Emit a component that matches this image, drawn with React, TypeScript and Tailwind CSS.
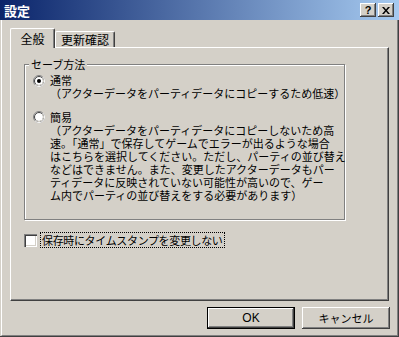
import React from "react";

const raised =
  "shadow-[inset_-1px_-1px_0_#404040,inset_1px_1px_0_#ffffff,inset_-2px_-2px_0_#808080,inset_2px_2px_0_#d4d0c8]";

function Radio({ checked }: { checked?: boolean }) {
  return (
    <svg width="12" height="12" viewBox="0 0 12 12" className="shrink-0">
      <circle cx="6" cy="6" r="5.5" fill="#ffffff" />
      <circle cx="6" cy="6" r="5.5" fill="none" stroke="#808080" strokeWidth="1" />
      <path d="M9.89 2.11 A5.5 5.5 0 0 1 2.11 9.89" fill="none" stroke="#ffffff" strokeWidth="1" />
      <circle cx="6" cy="6" r="4.5" fill="none" stroke="#404040" strokeWidth="1" />
      <path d="M9.18 2.82 A4.5 4.5 0 0 1 2.82 9.18" fill="none" stroke="#d4d0c8" strokeWidth="1" />
      {checked && <circle cx="6" cy="6" r="2" fill="#000000" />}
    </svg>
  );
}

export default function App() {
  return (
    <div className="w-[399px] h-[337px] bg-[#d4d0c8] flex flex-col font-['Noto_Sans_CJK_JP',sans-serif] text-black overflow-hidden">
      {/* Title bar */}
      <div className="h-[20px] shrink-0 flex items-center justify-between bg-[linear-gradient(to_right,#0a246a,#a6caf0)] pl-[4px] pr-[5px]">
        <span className="text-white font-bold text-[13px] leading-none">設定</span>
        <div className="flex items-center gap-[2px]">
          <div className={`w-[16px] h-[14px] bg-[#d4d0c8] flex items-center justify-center ${raised}`}>
            <span className="text-[11px] font-bold leading-none font-['Liberation_Sans',sans-serif] mt-[1px]">?</span>
          </div>
          <div className={`w-[16px] h-[14px] bg-[#d4d0c8] flex items-center justify-center ${raised}`}>
            <svg width="8" height="7" viewBox="0 0 8 7">
              <path d="M0 0h2l2 2.5L6 0h2L5 3.5 8 7H6L4 4.5 2 7H0l3-3.5z" fill="#000" />
            </svg>
          </div>
        </div>
      </div>

      {/* Body with window border */}
      <div className="flex-1 flex flex-col border-r border-b border-[#404040]">
        <div className="flex-1 flex flex-col ml-[1px] border-l border-white border-r border-b border-r-[#808080] border-b-[#808080] pt-[8px] pl-[8px] pr-[7px]">
          {/* Tabs */}
          <div className="h-[19px] flex items-end">
            <div className="relative z-10 -mb-[1px] h-[20px] w-[45px] bg-[#d4d0c8] border-l border-t border-white border-r border-r-[#404040] rounded-tl-[2px] rounded-tr-[2px] shadow-[inset_-1px_0_0_#808080] flex items-center justify-center text-[12px] leading-none">
              全般
            </div>
            <div className="h-[16px] w-[60px] bg-[#d4d0c8] border-l border-t border-white border-r border-r-[#404040] rounded-tl-[2px] rounded-tr-[2px] shadow-[inset_-1px_0_0_#808080] flex items-center justify-center text-[12px] leading-none pt-[1px]">
              更新確認
            </div>
          </div>

          {/* Panel */}
          <div className="w-[379px] h-[254px] border-l border-t border-white border-r border-b border-r-[#404040] border-b-[#404040] shadow-[inset_-1px_-1px_0_#808080] flex flex-col pl-[13px] pt-[16px]">
            {/* Group box */}
            <div className="relative w-[321px] h-[156px] border border-[#808080] shadow-[inset_1px_1px_0_#ffffff,1px_1px_0_#ffffff] pt-[9px] pl-[8px] text-[11px] leading-[13px]">
              <span className="absolute left-[4px] top-[-8px] bg-[#d4d0c8] px-[2px] text-[11px] leading-[14px]">
                セーブ方法
              </span>
              <div className="flex items-start gap-[5px]">
                <div className="mt-[1px]">
                  <Radio checked />
                </div>
                <div className="whitespace-nowrap">
                  <div>通常</div>
                  <div>（アクターデータをパーティデータにコピーするため低速）</div>
                </div>
              </div>
              <div className="flex items-start gap-[5px] mt-[11px]">
                <div className="mt-[0px]">
                  <Radio />
                </div>
                <div className="whitespace-nowrap">
                  <div>簡易</div>
                  <div>（アクターデータをパーティデータにコピーしないため高</div>
                  <div>速。「通常」で保存してゲームでエラーが出るような場合</div>
                  <div>はこちらを選択してください。ただし、パーティの並び替え</div>
                  <div>などはできません。また、変更したアクターデータもパー</div>
                  <div>ティデータに反映されていない可能性が高いので、ゲー</div>
                  <div>ム内でパーティの並び替えをする必要があります）</div>
                </div>
              </div>
            </div>

            {/* Checkbox */}
            <div className="mt-[12px] h-[16px] flex items-center gap-[3px]">
              <div className="w-[13px] h-[13px] bg-white shadow-[inset_1px_1px_0_#808080,inset_2px_2px_0_#404040,inset_-1px_-1px_0_#ffffff,inset_-2px_-2px_0_#d4d0c8]" />
              <div className="h-[16px] border border-dotted border-black px-[1px] flex items-center text-[11px] leading-none whitespace-nowrap tracking-[-0.35px]">
                保存時にタイムスタンプを変更しない
              </div>
            </div>
          </div>

          {/* Buttons */}
          <div className="mt-[6px] flex justify-end gap-[7px]">
            <div className="w-[88px] h-[22px] border border-black bg-[#d4d0c8]">
              <div className={`w-full h-full flex items-center justify-center text-[12px] leading-none font-['Liberation_Sans',sans-serif] ${raised}`}>
                OK
              </div>
            </div>
            <div className={`w-[88px] h-[22px] bg-[#d4d0c8] flex items-center justify-center text-[11px] leading-none ${raised}`}>
              キャンセル
            </div>
          </div>
        </div>
      </div>
    </div>
  );
}
